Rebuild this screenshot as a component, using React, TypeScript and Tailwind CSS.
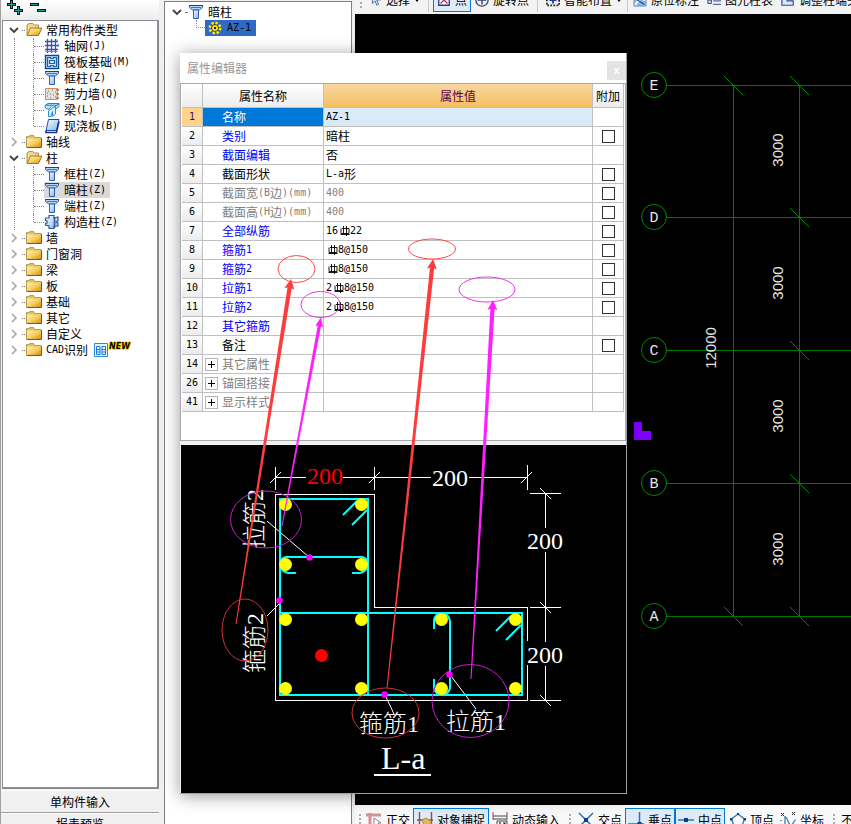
import { ReactNode, useState } from 'react';

const sim = 'font-["Noto_Sans_CJK_SC","Liberation_Sans",sans-serif]';

interface Row {
    id: number;
    name: string;
    tone: 'main' | 'key' | 'plain' | 'dim' | 'group';
    value?: string;
    check?: boolean;
}

const rows: Row[] = [
    { id: 1, name: '名称', tone: 'main', value: 'AZ-1' },
    { id: 2, name: '类别', tone: 'key', value: '暗柱', check: true },
    { id: 3, name: '截面编辑', tone: 'key', value: '否' },
    { id: 4, name: '截面形状', tone: 'plain', value: 'L-a形', check: true },
    { id: 5, name: '截面宽(B边)(mm)', tone: 'dim', value: '400', check: true },
    { id: 6, name: '截面高(H边)(mm)', tone: 'dim', value: '400', check: true },
    { id: 7, name: '全部纵筋', tone: 'key', value: '16#22', check: true },
    { id: 8, name: '箍筋1', tone: 'key', value: '#8@150', check: true },
    { id: 9, name: '箍筋2', tone: 'key', value: '#8@150', check: true },
    { id: 10, name: '拉筋1', tone: 'key', value: '2#8@150', check: true },
    { id: 11, name: '拉筋2', tone: 'key', value: '2#8@150', check: true },
    { id: 12, name: '其它箍筋', tone: 'key' },
    { id: 13, name: '备注', tone: 'plain', check: true },
    { id: 14, name: '其它属性', tone: 'group' },
    { id: 26, name: '锚固搭接', tone: 'group' },
    { id: 41, name: '显示样式', tone: 'group' },
];

const tones = {
    main: 'bg-[#0078d7] text-white',
    key: 'text-[#0000ff]',
    plain: 'text-black',
    dim: 'text-[#808080]',
    group: 'text-[#808080]',
};

// Chinese at 12px, half-width latin at 6px per character
function Txt({ children }: { children: string }) {
    return (
        <span className="inline-flex items-center whitespace-pre">
            {children.split(/([\x20-\x7e]+)/).filter(Boolean).map((part, i) =>
                <span key={i} className={/^[\x20-\x7e]/.test(part) ? 'font-["DejaVu_Sans_Mono",monospace] text-[10px] leading-3' : ''}>{part}</span>
            )}
        </span>
    );
}

/* ---------- icons ---------- */

function Ico({ children, className = 'h-4 w-4' }: { children: ReactNode; className?: string }) {
    return <svg viewBox="0 0 16 16" className={`${className} shrink-0`} aria-hidden="true">{children}</svg>;
}

function Defs() {
    return (
        <svg className="absolute h-0 w-0" aria-hidden="true">
            <defs>
                <linearGradient id="gold" x1="0" y1="0" x2="1" y2="1">
                    <stop offset="0" stopColor="#fff3b8" />
                    <stop offset=".5" stopColor="#f7cf62" />
                    <stop offset="1" stopColor="#d08a10" />
                </linearGradient>
                <linearGradient id="blue" x1="0" y1="0" x2="1" y2="1">
                    <stop offset="0" stopColor="#ffffff" />
                    <stop offset="1" stopColor="#7fb2f0" />
                </linearGradient>
            </defs>
        </svg>
    );
}

const FolderClosed = () => (
    <Ico>
        <path d="M.5 4V2.5h2L4 1.5h3.500l1.500 2h6V13.500H.5z" fill="#e8c15a" stroke="#a58a4a" strokeWidth=".8" />
        <path d="M1 4.500h14v9H1z" fill="url(#gold)" />
        <path d="M1 13.500h14.500V4" fill="none" stroke="#7d5a14" />
    </Ico>
);

const FolderOpen = () => (
    <Ico>
        <path d="M1 13V3l2-1.500h4l1 1.500h4.500v3" fill="#f3d88a" stroke="#a58a4a" strokeWidth=".9" />
        <path d="M1 13.500 4.500 6H16l-3.500 7.500z" fill="url(#gold)" stroke="#94701c" strokeWidth=".9" />
    </Ico>
);

const Grid = () => (
    <Ico>
        <path d="M3.500 1v14M7.500 1v14M11.500 1v14M1 3.500h13M1 7.500h14M1 11.500h13" stroke="#3055b0" strokeWidth="1.300" fill="none" />
        <path d="M13 1.500v2M14.500 6v3M1.500 13.500h12" stroke="#6d8bd0" fill="none" />
    </Ico>
);

const Raft = () => (
    <Ico>
        <path d="M1.500 1.500h13v13h-13z" fill="#d5e8fb" stroke="#0d4a8c" strokeWidth="1.400" />
        <path d="M3.500 3.500h3v1h3v-1h3v9h-3v-1h-3v1h-3zM5.500 6.500h5v3h-5z" fill="none" stroke="#1c61ab" strokeWidth="1.200" />
    </Ico>
);

const Pillar = () => (
    <Ico>
        <path d="M1.500 1.500h13v2l-3 2.500h-7l-3-2.500z" fill="#b4d6fa" stroke="#2c62b8" />
        <path d="M1 1.500h14" stroke="#16408f" />
        <path d="M3 3.500h10" stroke="#3c78cf" />
        <path d="M5.500 6v8.500h5V6z" fill="url(#blue)" stroke="#2a60bb" />
    </Ico>
);

const ShearWall = () => (
    <Ico>
        <path d="M1.500 2.500h12v11h-12z" fill="#e3e1df" stroke="#d78b5c" />
        <path d="M4 5h1M8 4h1M11 6h1M6 8h1M3 10h1M9 9h1M11 11h1M6 12h1M3 7h1" stroke="#777" />
        <path d="M12 4h3M12 8h3M12 12h3" stroke="#c8703a" strokeWidth="1.300" />
    </Ico>
);

const Beam = () => (
    <Ico>
        <path d="M1 3.500l3-2h11l-3 2.500z" fill="#8ed0f6" stroke="#1f83c4" />
        <path d="M1 3.500v2l4 2 2-3M12 4l3-2.500v3L9 9" fill="#c9e9fc" stroke="#1f83c4" />
        <path d="M4.500 14.500V9l7-5v8l-3 2.500V9.500l-1.500 5z" fill="#d6effd" stroke="#2c8ccd" />
    </Ico>
);

const Slab = () => (
    <Ico>
        <path d="M4.500 1.500h10.500l-2.500 11H2z" fill="url(#blue)" stroke="#1d4db0" />
        <path d="M2 12.500v2h10.500l2.500-11" fill="none" stroke="#12348a" strokeWidth="1.500" />
    </Ico>
);

const Structural = () => (
    <Ico>
        <path d="M5 1.500h5v2.500l4-1v4l-2 1 2 1v3l-4 .5v2H5V12l-3.500-1V9.500L3 9V7L1.500 6.500V4L5 4z" fill="url(#blue)" stroke="#34569b" strokeWidth="1.200" />
        <path d="M10.500 3v11" stroke="#3d5f9f" strokeWidth="1.600" />
    </Ico>
);

const CadIcon = () => (
    <Ico>
        <path d="M1.500 1.500h13v13h-13z" fill="#e8f5ff" stroke="#2b8ae0" />
        <path d="M3.500 4.500h3.500v8H3.500zM9 4.500h3.500v8H9zM3.500 7.500H7M9 7.500h3.500M3.500 10H7M9 10h3.500" fill="none" stroke="#1a78d0" />
    </Ico>
);

function Chevron({ open, label }: { open?: boolean; label: string }) {
    return (
        <button type="button" aria-label={label} className="flex h-4 w-3 shrink-0 items-center justify-center">
            <svg viewBox="0 0 12 12" className="h-3 w-3">
                {open
                    ? <path d="M2 4l4 4 4-4" fill="none" stroke="#404040" strokeWidth="1.800" />
                    : <path d="M4 2l4 4-4 4" fill="none" stroke="#a6a6a6" strokeWidth="1.600" />}
            </svg>
        </button>
    );
}

/* ---------- left tree ---------- */

interface Node {
    name: string;
    kids?: { name: string; icon: ReactNode; on?: boolean }[];
}

const tree: Node[] = [
    {
        name: '常用构件类型',
        kids: [
            { name: '轴网(J)', icon: <Grid /> },
            { name: '筏板基础(M)', icon: <Raft /> },
            { name: '框柱(Z)', icon: <Pillar /> },
            { name: '剪力墙(Q)', icon: <ShearWall /> },
            { name: '梁(L)', icon: <Beam /> },
            { name: '现浇板(B)', icon: <Slab /> },
        ],
    },
    { name: '轴线' },
    {
        name: '柱',
        kids: [
            { name: '框柱(Z)', icon: <Pillar /> },
            { name: '暗柱(Z)', icon: <Pillar />, on: true },
            { name: '端柱(Z)', icon: <Pillar /> },
            { name: '构造柱(Z)', icon: <Structural /> },
        ],
    },
    { name: '墙' },
    { name: '门窗洞' },
    { name: '梁' },
    { name: '板' },
    { name: '基础' },
    { name: '其它' },
    { name: '自定义' },
    { name: 'CAD识别' },
];

function Sidebar() {
    return (
        <aside className="flex w-[159px] shrink-0 flex-col border-l border-[#a0a0a0] bg-[#f0f0f0]">
            <div className="h-5 shrink-0 bg-gradient-to-b from-white to-[#ececec] pl-1.5">
                <svg viewBox="0 0 44 16" className="h-4 w-11" aria-hidden="true">
                    <path d="M0 4.500h9M4.500 0v9M7 10.500h9M11.500 6v9M23 4.500h9M30 10.500h9" stroke="#111" strokeWidth="3" />
                    <path d="M1 4.500h7M4.500 1v7M8 10.500h7M11.500 7v7M24 4.500h7M31 10.500h7" stroke="#12a595" strokeWidth="1.200" />
                </svg>
            </div>
            <ul className="ml-px min-h-0 flex-1 overflow-hidden border-2 border-t border-l border-[#8a8d94] bg-white pt-px pl-[5px]">
                {tree.map(node => (
                    <li key={node.name}>
                        <div className="flex h-4 items-center">
                            <Chevron open={!!node.kids} label={node.name} />
                            <span className="mr-px ml-0.5 w-[3px] border-t border-dotted border-[#777]" />
                            {node.kids ? <FolderOpen /> : <FolderClosed />}
                            <span className="ml-1 flex"><Txt>{node.name}</Txt></span>
                            {node.name === 'CAD识别' && (
                                <span className="ml-[5px] flex h-4 items-center">
                                    <CadIcon />
                                    <b className='self-start font-["DejaVu_Sans",sans-serif] text-[8px] leading-[10px] italic [text-shadow:1px_0_#fd0,-1px_0_#fd0,0_1px_#fd0,0_-1px_#fd0,1px_1px_#fd0]'>NEW</b>
                                </span>
                            )}
                        </div>
                        {node.kids && (
                            <ul className="ml-1.5 border-l border-dotted border-[#888] pl-[18px]">
                                {node.kids.map((kid, i) => (
                                    <li key={kid.name} className="flex h-4 items-center">
                                        <span className={`w-px self-start border-l border-dotted border-[#888] ${i === node.kids!.length - 1 ? 'h-2' : 'h-4'}`} />
                                        <span className="w-2.5 border-t border-dotted border-[#888]" />
                                        <span className={`flex h-4 items-center gap-1 pr-1 ${kid.on ? 'bg-[#d9d9d9]' : ''}`}>
                                            {kid.icon}
                                            <Txt>{kid.name}</Txt>
                                        </span>
                                    </li>
                                ))}
                            </ul>
                        )}
                    </li>
                ))}
            </ul>
            <button type="button" className="mt-px h-[23px] shrink-0 border-t border-b border-t-white border-b-[#9a9a9a]">单构件输入</button>
            <button type="button" className="h-[11px] shrink-0 overflow-hidden border-t border-white">
                <span className="block h-5 leading-5">报表预览</span>
            </button>
        </aside>
    );
}

/* ---------- toolbars ---------- */

function Tool({ icon, on, caret, pad = 'px-1', children }: { icon?: ReactNode; on?: boolean; caret?: boolean; pad?: string; children: string }) {
    return (
        <button type="button" className={`flex h-6 shrink-0 items-center gap-1 whitespace-nowrap ${pad} ${on ? 'bg-[#dcebf7] outline outline-1 -outline-offset-1 outline-[#0078d7]' : ''}`}>
            {icon}
            {children}
            {caret && <svg viewBox="0 0 6 6" className="h-1.5 w-1.5"><path d="M0 1h6L3 5z" /></svg>}
        </button>
    );
}

const Grip = () => (
    <svg viewBox="0 0 2 16" className="h-4 w-0.5 shrink-0 self-center" aria-hidden="true">
        <path d="M0 3h2M0 7h2M0 11h2M0 15h2" stroke="#aaa" strokeWidth="2" />
    </svg>
);

const Sep = ({ gap = 'mx-1' }: { gap?: string }) => <span className={`${gap} h-6 w-px shrink-0 bg-[#c8c8c8]`} />;

const small = 'h-3.5 w-3.5';

function TopBar() {
    return (
        <div className="flex h-3.5 shrink-0 items-end overflow-hidden bg-[#f3f3f3] pb-0.5 pl-[5px]">
            <span className="mr-0.5 flex h-6"><Grip /></span>
            <Tool caret icon={<Ico className={small}><path d="M5 0v12l3-3 2 5 2-1-2-5h4z" fill="#e4ecf6" stroke="#44618f" /></Ico>}>选择</Tool>
            <Sep />
            <Tool on icon={<Ico className={small}><path d="M2 2h12v12H2z" fill="#fff" stroke="#26378c" strokeWidth="1.500" /><path d="M4 4l8 8M12 4l-8 8" stroke="#c0304a" strokeWidth="1.500" /></Ico>}>点</Tool>
            <Tool icon={<Ico className={small}><circle cx="8" cy="8" r="7" fill="none" stroke="#333f66" strokeWidth="1.400" /><path d="M3 8h10M8 3v10" stroke="#333f66" strokeWidth="1.600" /></Ico>}>旋转点</Tool>
            <Sep />
            <Tool caret icon={<Ico className={small}><path d="M1 1h14v13H1z" fill="#e8eef8" stroke="#222" strokeWidth="2" strokeDasharray="2 1.500" /><path d="M8 4v8M4 8h8" stroke="#26378c" strokeWidth="2" /></Ico>}>智能布置</Tool>
            <Sep gap="mx-px" />
            <Tool icon={<Ico className={small}><path d="M1 1h14v14H1z" fill="#8fb6e6" stroke="#6f94c4" /><path d="M3 14c0-5 4-3 5-7s5-2 5 2" fill="none" stroke="#fff" strokeWidth="2" /><path d="M5 8l8 5" stroke="#28549b" strokeWidth="1.500" /></Ico>}>原位标注</Tool>
            <Tool icon={<Ico className={small}><path d="M1 8h4v4H1z" fill="#c8d6f2" stroke="#26378c" /><path d="M7 5h9M7 9h9M7 13h9" stroke="#5a6c9c" strokeWidth="1.500" /></Ico>}>图元柱表</Tool>
            <Tool icon={<Ico className={small}><path d="M1 3h6v6h7v5H1z" fill="#dce8fa" stroke="#2f4a9c" strokeWidth="1.300" /><path d="M9 7l5-5" stroke="#555" strokeWidth="1.500" /></Ico>}>调整柱端头</Tool>
        </div>
    );
}

function BottomBar() {
    const pad = 'px-[3px]';
    return (
        <div className="flex h-[19px] shrink-0 items-start overflow-hidden bg-[#f8f8f8] pt-[3px] pl-1">
            <span className="mr-0.5 flex h-6"><Grip /></span>
            <Tool pad={pad} icon={<Ico><path d="M0 3h15M4 1v14" stroke="#d98f95" strokeWidth="3" /><path d="M8 6v8l2-2 2 3 1-1-1-3h3z" fill="#fff" stroke="#888" /></Ico>}>正交</Tool>
            <Tool pad="px-1" on icon={<Ico><path d="M2.500 0v16M14.500 0v16M0 8h16" stroke="#a3434d" strokeWidth="1.400" /><path d="M5 8l4-2 5 3v7H8z" fill="#e0b95c" stroke="#b08c3c" /></Ico>}>对象捕捉</Tool>
            <Tool pad={pad} icon={<Ico><path d="M1 0v8M15 0v8" stroke="#a3434d" /><path d="M1 4h14M1 7h14M5 9h10v7H5z" fill="none" stroke="#444" /><path d="M8 10v5M11 11h2l-2 4h2" fill="none" stroke="#222" strokeWidth="1.200" /></Ico>}>动态输入</Tool>
            <span className="mr-1 ml-1.5 flex h-6"><Grip /></span>
            <Tool pad={pad} icon={<Ico><path d="M1 1l14 14M15 1L1 15" stroke="#3474a8" strokeWidth="1.500" /><path d="M6 6h4v4H6z" fill="#0b3d90" /></Ico>}>交点</Tool>
            <Tool pad={pad} on icon={<Ico><path d="M11.500 0v12M0 12h16" stroke="#3474a8" strokeWidth="1.500" /><path d="M9.500 10h4v4h-4z" fill="#0b3d90" /></Ico>}>垂点</Tool>
            <Tool pad={pad} on icon={<Ico><path d="M0 8h16" stroke="#3474a8" strokeWidth="1.500" /><path d="M6 6h4v4H6z" fill="#0b3d90" /></Ico>}>中点</Tool>
            <span className="ml-0.5" />
            <Tool pad={pad} icon={<Ico><path d="M8 2l6.500 5-2.500 7H4L1.500 7z" fill="none" stroke="#3474a8" strokeWidth="1.300" /><path d="M7 1h2v2H7zM0 6h2.500v2.500H0zM13.500 6H16v2.500h-2.500z" fill="#0b3d90" /></Ico>}>顶点</Tool>
            <Tool pad={pad} icon={<Ico><path d="M5 4v11M5 5c3 0 3 8 6 8s2-5 5-5" fill="none" stroke="#3474a8" strokeWidth="1.200" /><path d="M1 1l3 3M4 1L1 4M12 0l3 3M15 0l-3 3M1 8v1M1 12v1" stroke="#223" /></Ico>}>坐标</Tool>
            <span className="mr-0.5 ml-1.5 flex h-6"><Grip /></span>
            <Tool>不偏移</Tool>
        </div>
    );
}

/* ---------- drawing area ---------- */

const axes = [
    { y: 85, label: 'E' },
    { y: 217, label: 'D' },
    { y: 350, label: 'C' },
    { y: 483, label: 'B' },
    { y: 616, label: 'A' },
];

function Canvas() {
    return (
        <svg className="min-h-0 w-full flex-1 bg-black" role="img" aria-label="axis grid">
            <g transform="translate(-355 -14)" fontFamily="Liberation Sans, sans-serif" fill="#e6e6e6">
                <g stroke="#007800" fill="none" shapeRendering="crispEdges">
                    <path d="M733.500 85v532M799.500 85v532" />
                    {axes.map(a => <path key={a.label} d={`M666 ${a.y}.5h600`} />)}
                </g>
                <g stroke="#008a00" fill="none">
                    {axes.map(a => <path key={a.label} d={`M790 ${a.y - 9}l19 19`} />)}
                    <path d="M724 76l19 19M724 607l19 19" />
                </g>
                {axes.map(a => (
                    <g key={a.label}>
                        <circle cx="654" cy={a.y} r="12.500" fill="none" stroke="#008a00" />
                        <text x="654" y={a.y + 5} fontSize="15" fontFamily="Liberation Mono, monospace" textAnchor="middle">{a.label}</text>
                    </g>
                ))}
                {[150, 283, 416, 549].map(y => (
                    <text key={y} transform={`translate(783 ${y}) rotate(-90)`} fontSize="15" textAnchor="middle">3000</text>
                ))}
                <text transform="translate(716 348) rotate(-90)" fontSize="15" textAnchor="middle">12000</text>
                <path d="M634 422h8v9h9v9h-17z" fill="#7f00ff" />
            </g>
        </svg>
    );
}

const bars = [
    [285.5, 504.5], [361.5, 504.5], [285.5, 564.5], [361.5, 564.5], [285.5, 619.5], [361.5, 619.5],
    [285.5, 688.5], [361.5, 688.5], [441.5, 619.5], [515.5, 619.5], [441.5, 688.5], [515.5, 688.5],
];

const marks = [[309.5, 557.5], [279.5, 600.5], [384.5, 694.5], [449.5, 674.5]];

function Section() {
    return (
        <svg className="h-[348px] w-full bg-black" role="img" aria-label="L-a">
            <g transform="translate(-181 -445)">
                <g fill="none" stroke="#fff" shapeRendering="crispEdges">
                    <path d="M527.500 641v-33.500h-153v-113h-99v206h252v-36" />
                    <path d="M275.500 477.500H306M343 477.500h88M469 477.500h58M275.500 467v23M374.500 467v23M527.500 465v25" />
                    <path d="M545.500 493v35M545.500 552v90M545.500 666v35M530 493.500h31M530 607.500h31M530 700.500h31" />
                </g>
                <g fill="none" stroke="#fff">
                    <path d="M270 483l11-11M369 483l11-11M521 483l11-11M540 488l11 11M540 602l11 11M540 695l11 11" />
                    <path d="M267 521l42 36M267 616l12-12M386 697l8 17M451 676l25 33" />
                </g>
                <g fill="none" stroke="#00ffff" strokeWidth="2">
                    <path d="M280 499h88v196h-88zM280 613h242v82H280z" />
                    <path d="M296 573h-8q-7-2-8-8 0-7 6-8h76q6 1 6 8-1 6-8 8h-8" />
                    <path d="M434 629v-9q1-6 8-7 7 1 8 8v67q-1 6-8 7-7-1-8-7v-9" />
                    <path d="M343 515l14-14M352 525l15-15M496 631l15-15M506 640l15-15" />
                </g>
                {bars.map(([x, y]) => <circle key={`${x}-${y}`} cx={x} cy={y} r="6.500" fill="#ffff00" />)}
                <circle cx="321.500" cy="655.500" r="6.500" fill="#ff0000" />
                {marks.map(([x, y]) => <circle key={x} cx={x} cy={y} r="3.200" fill="#ff00ff" />)}
                <g fill="#fff" fontSize="24" fontFamily="Liberation Serif, Noto Sans CJK SC, serif" fontWeight="300">
                    <text x="307" y="484" fill="#ff0000">200</text>
                    <text x="432" y="486">200</text>
                    <text x="527" y="549">200</text>
                    <text x="527" y="663">200</text>
                    <text x="359" y="732">箍筋1</text>
                    <text x="446" y="730">拉筋1</text>
                    <text transform="translate(263 549) rotate(-90)">拉筋2</text>
                    <text transform="translate(263 673) rotate(-90)">箍筋2</text>
                    <text x="381" y="769" fontSize="32">L-a</text>
                </g>
                <path d="M374 775h57" stroke="#fff" strokeWidth="2" />
            </g>
        </svg>
    );
}

const arrows = [
    { tail: [236, 624], tip: [291, 279], size: 5, color: '#ff3b3b' },
    { tail: [282, 526], tip: [321, 317], size: 4, color: '#ff20ff' },
    { tail: [387, 688], tip: [433, 259], size: 5, color: '#ff3b3b' },
    { tail: [471, 679], tip: [493, 300], size: 5, color: '#ff20ff' },
];

const rings = [
    { c: [296.5, 269], r: [18.5, 13.5], color: '#ff4848' },
    { c: [320.5, 304.5], r: [19.5, 13], color: '#f030f0' },
    { c: [432, 249], r: [23.5, 10], color: '#ff4848' },
    { c: [487, 289.5], r: [28, 12.5], color: '#f030f0' },
    { c: [266, 519.5], r: [35.5, 28.5], color: '#c020c8' },
    { c: [245, 630], r: [23, 31], color: '#d03030' },
    { c: [385.5, 713], r: [33.5, 25], color: '#d03030' },
    { c: [470.5, 701], r: [38.5, 36.5], color: '#c020c8' },
];

// shaft widens from the tail to the head
function arrowPath(tail: number[], tip: number[], size: number) {
    const dx = tip[0] - tail[0];
    const dy = tip[1] - tail[1];
    const len = Math.hypot(dx, dy);
    const ux = dx / len;
    const uy = dy / len;
    const at = (back: number, side: number) => `${tip[0] - ux * back - uy * side} ${tip[1] - uy * back + ux * side}`;
    const w = size * 0.42;
    return `M${at(len, 0.5)}L${at(9, w)}L${at(10, size)}L${at(0, 0)}L${at(10, -size)}L${at(9, -w)}L${at(len, -0.5)}Z`;
}

function Notes() {
    return (
        <svg className="pointer-events-none absolute inset-0 h-full w-full" aria-hidden="true">
            {rings.map(({ c, r, color }) => (
                <ellipse key={c[0]} cx={c[0]} cy={c[1]} rx={r[0]} ry={r[1]} fill="none" stroke={color} />
            ))}
            {arrows.map(({ tail, tip, size, color }) => (
                <path key={tip[0]} d={arrowPath(tail, tip, size)} fill={color} />
            ))}
        </svg>
    );
}

/* ---------- property editor ---------- */

function Value({ text }: { text: string }) {
    if (!text.includes('#')) return <Txt>{text}</Txt>;
    const [count, size] = text.split('#');
    return (
        <span className="flex items-center">
            <Txt>{count}</Txt>
            <svg viewBox="0 0 10 10" className="ml-0.5 h-2.5 w-2.5" role="img" aria-label="HRB400">
                <path d="M3.500 0v8M6.500 0v10M1 2.500v5h8v-5H2M.5 8.500h9" fill="none" stroke="#000" strokeWidth=".9" />
            </svg>
            <Txt>{size}</Txt>
        </span>
    );
}

function Editor() {
    const [checked, setChecked] = useState<Record<number, boolean>>({});
    const cell = 'border-r border-b border-[#c0c0c0] p-0';
    const head = 'bg-gradient-to-b from-white to-[#ececec] font-normal';

    return (
        <section className="absolute top-[53px] left-[180px] w-[447px] border-r border-b border-[#a0a0a0] bg-[#f0f0f0] shadow-[0_2px_16px_rgba(0,0,0,0.4)]">
            <header className="flex h-[30px] items-center justify-between bg-white pl-[7px] text-[#999]">
                <h2>属性编辑器</h2>
                <button type="button" aria-label="关闭" className="mt-1 h-[19px] w-[19px] bg-[#e3e3e3] text-[10px] leading-[18px] font-bold text-white">x</button>
            </header>
            <div className="mb-1 h-[358px] border border-[#a8a8b0] bg-white px-px">
                <table className="w-full table-fixed border-separate border-spacing-0">
                    <colgroup>
                        <col className="w-[21px]" />
                        <col className="w-[121px]" />
                        <col />
                        <col className="w-[31px]" />
                    </colgroup>
                    <thead>
                        <tr className="h-6">
                            <th className={`${cell} ${head}`} />
                            <th className={`${cell} ${head}`}>属性名称</th>
                            <th className={`${cell} bg-gradient-to-b from-[#fad8a0] to-[#f2be5e] font-normal text-[#5c0050]`}>属性值</th>
                            <th className={`${cell} ${head} whitespace-nowrap`}>附加</th>
                        </tr>
                    </thead>
                    <tbody>
                        {rows.map(row => (
                            <tr key={row.id}>
                                <td className={`${cell} ${row.id === 1 ? 'bg-[#ffd48a] text-[#5c0050]' : 'bg-gradient-to-b from-white to-[#ececec]'}`}>
                                    <div className="flex h-[18px] items-center justify-center"><Txt>{String(row.id)}</Txt></div>
                                </td>
                                <td className={`${cell} ${tones[row.tone]}`}>
                                    <div className="flex h-[18px] items-center">
                                        <span className="flex w-[19px] shrink-0 pl-0.5">
                                            {row.tone === 'group' && (
                                                <button type="button" aria-label={row.name} className="h-[13px] w-[13px] border border-[#b4b4b4] bg-white">
                                                    <svg viewBox="0 0 11 11" className="h-[11px] w-[11px]"><path d="M2 5.500h7M5.500 2v7" stroke="#000" /></svg>
                                                </button>
                                            )}
                                        </span>
                                        <Txt>{row.name}</Txt>
                                    </div>
                                </td>
                                <td className={`${cell} ${row.id === 1 ? 'bg-[#d9eaf8]' : ''} ${row.tone === 'dim' ? 'text-[#808080]' : ''}`}>
                                    <div className="flex h-[18px] items-center pl-0.5">{row.value && <Value text={row.value} />}</div>
                                </td>
                                <td className={cell}>
                                    {row.check && (
                                        <input
                                            type="checkbox"
                                            aria-label={row.name}
                                            checked={!!checked[row.id]}
                                            onChange={e => setChecked({ ...checked, [row.id]: e.target.checked })}
                                            className="mx-auto block h-[13px] w-[13px] appearance-none border border-[#333] bg-white checked:bg-[#333]"
                                        />
                                    )}
                                </td>
                            </tr>
                        ))}
                    </tbody>
                </table>
            </div>
            <div className="pl-px"><Section /></div>
        </section>
    );
}

export default function App() {
    return (
        <div className={`${sim} relative flex h-screen overflow-hidden bg-[#f0f0f0] text-[12px] leading-4 text-black`}>
            <Defs />
            <Sidebar />
            <div className="mt-px mr-[3px] ml-[5px] w-[188px] shrink-0 border-t border-r border-l border-[#7a7f8a] bg-white pt-0.5 pl-1.5">
                <div className="flex h-4 items-center">
                    <Chevron open label="暗柱" />
                    <span className="mr-px ml-0.5 w-0.5 border-t border-dotted border-[#777]" />
                    <Pillar />
                    <span className="ml-1">暗柱</span>
                </div>
                <div className="ml-[25px] flex h-4 items-center">
                    <span className="h-2 w-[9px] self-start border-b border-l border-dotted border-[#888]" />
                    <span className="flex h-4 items-center gap-1 bg-[#316ac5] pr-[5px] pl-0.5">
                        <Ico>
                            <circle cx="8" cy="8" r="5" fill="none" stroke="#ffee00" strokeWidth="3" strokeDasharray="2.200 1.700" />
                            <circle cx="8" cy="8" r="3.500" fill="#ffee00" stroke="#222" strokeWidth=".8" />
                            <circle cx="8" cy="8" r="1.200" fill="#222" />
                        </Ico>
                        <Txt>AZ-1</Txt>
                    </span>
                </div>
            </div>
            <main className="flex min-w-0 flex-1 flex-col">
                <TopBar />
                <Canvas />
                <BottomBar />
            </main>
            <Editor />
            <Notes />
        </div>
    );
}
